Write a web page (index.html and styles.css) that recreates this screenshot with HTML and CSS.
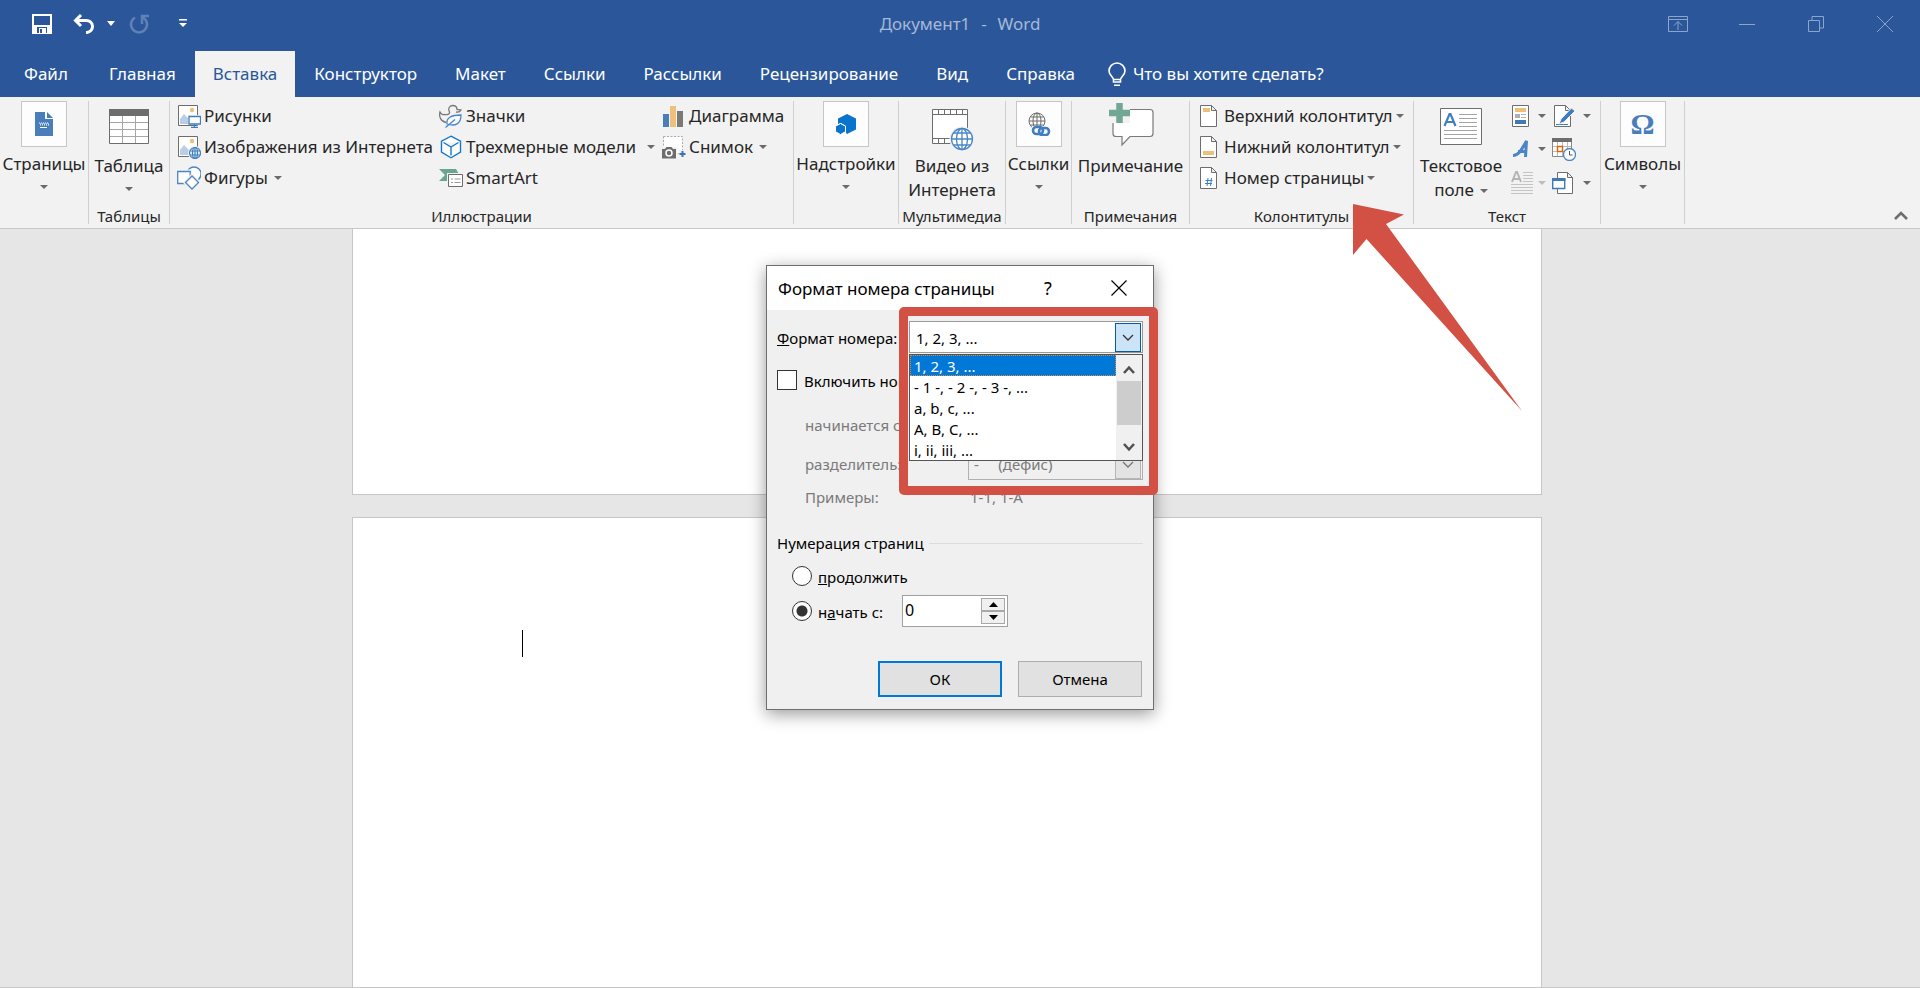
FILE: index.html
```html
<!DOCTYPE html>
<html lang="ru">
<head>
<meta charset="utf-8">
<title>Документ1 - Word</title>
<link rel="stylesheet" href="styles.css">
</head>
<body>
<div class="app">
  <header class="titlebar">
    <div class="quick">
      <button class="quick-btn save" aria-label="Сохранить"><svg width="20" height="20" viewBox="0 0 20 20"><path d="M1 1h18v18H1z" fill="none" stroke="#fff" stroke-width="2"/><path d="M1 11h18v8H1z" fill="#fff"/><path d="M5 13h10v6H5z" fill="#2b579a"/><path d="M7 14h7v5H7z" fill="#fff"/><path d="M8 15h2v4H8z" fill="#2b579a"/></svg></button>
      <button class="quick-btn undo" aria-label="Отменить"><svg width="22" height="20" viewBox="0 0 22 20"><path d="M8 1L2.500 6.500L8 12M3 6.500H13a6 6 0 0 1 1 12h-1" fill="none" stroke="#fff" stroke-width="3"/></svg></button>
      <button class="quick-btn undo-more" aria-label="Список отмен"><svg width="8" height="5"><path d="M0 0h8L4 5z" fill="#fff"/></svg></button>
      <button class="quick-btn redo" aria-label="Повторить"><svg width="20" height="20" viewBox="0 0 20 20"><path d="M6 3.500A8 8 0 1 0 14 3.500M13 10V2h7" fill="none" stroke="#5f81b4" stroke-width="2.500"/></svg></button>
      <button class="quick-btn" aria-label="Настройка панели"><svg width="8" height="9"><path d="M0 0h8v1.500H0zM0 4h8L4 8z" fill="#fff"/></svg></button>
    </div>
    <h1 class="doc-title">Документ1&nbsp; <span class="dash">-</span>&nbsp; Word</h1>
    <div class="window-controls">
      <button aria-label="Параметры ленты"><svg width="20" height="16" viewBox="0 0 20 16"><path d="M.5.5h19v15H.5zM.5 3.500h19M10 14V5.500M6 9.500l4-4 4 4"/></svg></button>
      <button aria-label="Свернуть"><svg width="16" height="16"><path d="M0 8.500h16"/></svg></button>
      <button aria-label="Свернуть в окно"><svg width="16" height="16"><path d="M.5 4.500h11v11H.5zM4 4V.5h11.500v11.500H12"/></svg></button>
      <button aria-label="Закрыть"><svg width="16" height="16"><path d="M0 0l16 16M16 0L0 16"/></svg></button>
    </div>
  </header>

  <nav class="tabs">
    <a class="tab tab-file" href="#">Файл</a>
    <a class="tab" href="#">Главная</a>
    <a class="tab active" href="#">Вставка</a>
    <a class="tab" href="#">Конструктор</a>
    <a class="tab" href="#">Макет</a>
    <a class="tab" href="#">Ссылки</a>
    <a class="tab" href="#">Рассылки</a>
    <a class="tab" href="#">Рецензирование</a>
    <a class="tab" href="#">Вид</a>
    <a class="tab" href="#">Справка</a>
    <a class="tab tell" href="#"><svg width="18" height="25" viewBox="0 0 18 25"><path d="M5.500 20v-2.500c0-2.500-4.500-4-4.500-8.500a8 8 0 0 1 16 0c0 4.500-4.500 6-4.500 8.500V20zM5.500 17.500h7" fill="none" stroke="#fff" stroke-width="1.600"/><path d="M6 22.500h6v1.500H6z" fill="#fff"/></svg>Что вы хотите сделать?</a>
  </nav>

  <section class="ribbon" aria-label="Вставка">
    <div class="group g-pages">
      <button class="big"><span class="tile"><svg width="18" height="24" viewBox="0 0 18 24"><path d="M0 0h10v7h8v17H0z" fill="#4a7ebb"/><path d="M12 0l6 6h-6z" fill="#4a7ebb"/><path d="M4 11h10M5 13h9" stroke="#fff" stroke-width="1" stroke-dasharray="1 1"/><path d="M4 12h10" stroke="#fff" stroke-width="1" stroke-dasharray="1 1" stroke-dashoffset="1"/><path d="M5 15.500h7" stroke="#fff" stroke-width="1"/></svg></span><span class="big-label">Страницы</span><i class="caret"></i></button>
    </div>
    <div class="group g-table">
      <button class="big plain"><svg class="big-icon" width="42" height="46" viewBox="0 0 42 46"><path d="M1.500 8.500h39v34h-39z" fill="#fff" stroke="#6d6d6d"/><path d="M1 8h40v7H1z" fill="#6d6d6d"/><path d="M2 21.500h38M2 28.500h38M2 35.500h38M14.500 15v27M27.500 15v27" stroke="#a6a6a6"/></svg><span class="big-label">Таблица</span><i class="caret"></i></button>
      <h2>Таблицы</h2>
    </div>
    <div class="group g-illus">
      <div class="cols">
        <div class="col">
          <button class="item"><svg width="24" height="24"><path d="M1.500 1.500h19v20h-19z" fill="#fff" stroke="#6d6d6d"/><path d="M3 20v-5l4-5 5 5v5z" fill="#b9cde4"/><circle cx="15" cy="6" r="2.200" fill="#edc07a"/><path d="M11 11h13v10H11z" fill="#f2f2f2"/><path d="M12 12.500h11.500v7.500H12zM17.500 20v3.500M14 23.500h7" fill="#fff" stroke="#3f7fc1" stroke-width="1.300"/></svg>Рисунки</button>
          <button class="item"><svg width="24" height="24"><path d="M1.500 1.500h19v20h-19z" fill="#fff" stroke="#6d6d6d"/><path d="M3 20v-5l4-5 5 5v5z" fill="#b9cde4"/><circle cx="15" cy="6" r="2.200" fill="#edc07a"/><circle cx="18" cy="18" r="7" fill="#f2f2f2"/><g fill="none" stroke="#3f7fc1" stroke-width="1.200"><circle cx="18" cy="18" r="5.500"/><ellipse cx="18" cy="18" rx="2.500" ry="5.500"/><path d="M13 16h10M13 20h10M18 12v12"/></g></svg>Изображения из Интернета</button>
          <button class="item"><svg width="24" height="24" fill="#fff" stroke="#4a86c6" stroke-width="1.300"><circle cx="17" cy="8" r="7"/><path d="M.7 5.500h12.500v12H.7z" stroke="#f2f2f2" stroke-width="4"/><path d="M.7 5.500h12.500v12H.7z"/><path d="M15 10l6.500 6.500L15 23l-6.500-6.500z" stroke="#f2f2f2" stroke-width="4"/><path d="M15 10l6.500 6.500L15 23l-6.500-6.500z"/></svg>Фигуры<i class="caret"></i></button>
        </div>
        <div class="col">
          <button class="item"><svg width="24" height="24" fill="none" stroke-width="1.300"><path d="M7 18.500C1 17 0 12 1 8c1 2 3 3 4 2.500 3 .5 6 0 5.500-2.500C9 5 10 1.500 13.500 1.500c3 0 4.500 2 4.500 4l4 .5c-1 2-2.500 2.500-5 2" stroke="#777"/><path d="M8 20c-1-6 4-9 14-9 0 8-5 12-14 9z" fill="#f8fafc" stroke="#4a86c6"/><path d="M6.500 23.500l9.500-8" stroke="#4a86c6"/></svg>Значки</button>
          <button class="item"><svg width="24" height="24" fill="#fff" stroke="#1478c8" stroke-width="1.400"><path d="M12 1.200l9.500 5v11l-9.500 5.600-9.500-5.600v-11zM4.500 7.500L12 12l7.500-4.500M12 12v8.500"/></svg>Трехмерные модели<i class="caret caret-far"></i></button>
          <button class="item"><svg width="24" height="24"><path d="M0 3h17l4 7v5H0l6-6z" fill="#6aa68f"/><path d="M8 7h16v15H8z" fill="#f2f2f2"/><path d="M9.500 8.500h14v12h-14z" fill="#fff" stroke="#6d6d6d"/><path d="M12 13h2m1.500 0h6M12 16.500h2m1.500 0h6" stroke="#999"/></svg>SmartArt</button>
        </div>
        <div class="col">
          <button class="item"><svg width="24" height="24"><path d="M1 10h6v13H1z" fill="#4a7ebb"/><path d="M8 2h6v21H8z" fill="#eec07c"/><path d="M15 7h6v16h-6z" fill="#7a7973"/></svg>Диаграмма</button>
          <button class="item"><svg width="24" height="24"><path d="M1.500 1.500h19v17h-19z" fill="#fff" stroke="#aaa" stroke-dasharray="2 1.500"/><path d="M0 12h15v12H0z" fill="#f2f2f2"/><path d="M0 14h3l1.500-2h5L11 14h3v9.500H0z" fill="#6d6d6d"/><circle cx="7" cy="18" r="3" fill="none" stroke="#fff" stroke-width="1.500"/><path d="M17 15h7v7h-7z" fill="#f2f2f2"/><path d="M20.500 16v6M17.500 19h6" stroke="#3773b5" stroke-width="2"/></svg>Снимок<i class="caret"></i></button>
        </div>
      </div>
      <h2>Иллюстрации</h2>
    </div>
    <div class="group g-addins">
      <button class="big"><span class="tile"><svg width="22" height="22" viewBox="0 0 22 22"><path d="M12 1l9 4.500v11L12 21 11 20V13L6 10 3 11V5.500z" fill="#0a73cc"/><path d="M5.500 10.500l5 2.700v5.500l-5 2.800-5-2.800v-5.500z" fill="#0a73cc" stroke="#fff"/></svg></span><span class="big-label">Надстройки</span><i class="caret"></i></button>
    </div>
    <div class="group g-media">
      <button class="big plain"><svg class="big-icon" width="42" height="46" viewBox="0 0 42 46"><path d="M1.500 8.500h35v34h-35z" fill="#fff" stroke="#6d6d6d"/><path d="M1 13.500h35M1 37.500h20M7.500 9v4M13.500 9v4M19.500 9v4M25.500 9v4M31.500 9v4M7.500 38v4M13.500 38v4M19.500 38v4" stroke="#6d6d6d"/><circle cx="31" cy="38" r="12.500" fill="#f2f2f2"/><g fill="#fff" stroke="#4a86c6" stroke-width="1.300"><circle cx="31" cy="38" r="10.500"/><ellipse cx="31" cy="38" rx="5.500" ry="10.500"/><path d="M21 38h20M23 32h16M23 44h16M31 28v20" /></g></svg><span class="big-label">Видео из<br>Интернета</span></button>
      <h2>Мультимедиа</h2>
    </div>
    <div class="group g-links">
      <button class="big"><span class="tile"><svg width="24" height="24"><g fill="none" stroke="#6d6d6d"><circle cx="10" cy="9" r="8"/><ellipse cx="10" cy="9" rx="4" ry="8"/><path d="M2 9h16M3.500 5h13M3.500 13h13M10 1v16"/></g><path d="M5 14h19v10H5z" fill="#fdfdfd"/><g fill="none" stroke="#3f7fc1" stroke-width="2.600"><rect x="6" y="15" width="10" height="7" rx="3.500"/><rect x="12" y="16" width="10" height="7" rx="3.500"/></g></svg></span><span class="big-label">Ссылки</span><i class="caret"></i></button>
    </div>
    <div class="group g-notes">
      <button class="big plain"><svg class="big-icon" width="48" height="46" viewBox="0 0 48 46"><path d="M9 8.500h34q3 0 3 3v21q0 3-3 3H23l-8 8.500v-8.500H9q-3 0-3-3v-21q0-3 3-3z" fill="#fff" stroke="#7a7a7a" stroke-width="1.200"/><path d="M2 2h21v20H2z" fill="#f2f2f2"/><path d="M12.500 2v20M2 12h21" stroke="#71a794" stroke-width="6.500"/></svg><span class="big-label">Примечание</span></button>
      <h2>Примечания</h2>
    </div>
    <div class="group g-headers">
      <div class="col">
        <button class="item"><svg width="24" height="24"><path d="M.5 1.500h11l5 5v16H.5zM11.500 1.500v5h5" fill="#fff" stroke="#6d6d6d"/><path d="M3 4h7v4H3z" fill="#edc07a"/></svg>Верхний колонтитул<i class="caret"></i></button>
        <button class="item"><svg width="24" height="24"><path d="M.5 1.500h11l5 5v16H.5zM11.500 1.500v5h5" fill="#fff" stroke="#6d6d6d"/><path d="M3 16h11v4H3z" fill="#edc07a"/></svg>Нижний колонтитул<i class="caret"></i></button>
        <button class="item"><svg width="24" height="24"><path d="M.5 1.500h11l5 5v16H.5zM11.500 1.500v5h5" fill="#fff" stroke="#6d6d6d"/><path d="M8 12l-1 8M11.500 12l-1 8M5.500 14.500h7M5 17.500h7" stroke="#3f7fc1"/></svg>Номер страницы<i class="caret"></i></button>
      </div>
      <h2>Колонтитулы</h2>
    </div>
    <div class="group g-text">
      <div class="cols">
        <button class="big plain"><svg class="big-icon" width="44" height="46" viewBox="0 0 44 46"><path d="M1.500 7.500h41v36h-41z" fill="#fff" stroke="#6d6d6d"/><path d="M5.500 25L10.500 13h1L16.500 25M7.500 21h7" fill="none" stroke="#3f7fc1" stroke-width="2.200"/><path d="M20 13.500h18M20 17.500h18M20 21.500h18M20 25.500h18M5 29.500h33M5 33.500h33M5 37.500h33" stroke="#a6a6a6"/></svg><span class="big-label">Текстовое<br>поле<i class="caret"></i></span></button>
        <div class="mini">
          <button class="item" aria-label="Экспресс-блоки"><svg width="24" height="24"><path d="M1.500 1.500h16v21h-16z" fill="#fff" stroke="#6d6d6d"/><path d="M4 4h11v4H4z" fill="#edc07a"/><path d="M4 10h5v4H4z" fill="#b0b0b0"/><path d="M10 10.500h5M10 13.500h5" stroke="#b0b0b0"/><path d="M4 16h11v4H4z" fill="#3f7ab5"/></svg><i class="caret"></i></button>
          <button class="item" aria-label="Строка подписи"><svg width="24" height="24"><path d="M2.500 1.500h11l5 5v16h-16zM13.500 1.500v5h5" fill="#fff" stroke="#6d6d6d"/><path d="M4 20.500h12" stroke="#3f7fc1"/><path d="M7 20l2-5L19.500 4l3.500 3L12 18z" fill="#3f7fc1" stroke="#f2f2f2"/></svg><i class="caret"></i></button>
          <button class="item" aria-label="WordArt"><svg width="24" height="24" fill="none" stroke="#4a86c6" stroke-width="3"><path d="M2 18.500c5 0 7-3 13.500-14.500L14.500 20M7 14.500h9"/></svg><i class="caret"></i></button>
          <button class="item" aria-label="Дата и время"><svg width="24" height="24"><path d="M.5 2.500h19v17H.5z" fill="#fff" stroke="#888"/><path d="M0 1h20v4H0z" fill="#6d6d6d"/><path d="M1 9.500h18M1 14.500h18M5.500 5v14M10.500 5v14M15.500 5v14" stroke="#bbb"/><path d="M5.500 9.500h5v5h-5z" fill="#fff" stroke="#d8690f" stroke-width="1.500"/><circle cx="17.500" cy="17.500" r="6" fill="#fff" stroke="#4a86c6" stroke-width="1.300"/><path d="M17.500 14v4h3" fill="none" stroke="#555"/></svg></button>
          <button class="item off" aria-label="Буквица" disabled><svg width="24" height="24"><path d="M1 11L5 1h1l4 10M2.500 8h6" fill="none" stroke="#b5b5b5" stroke-width="2"/><path d="M12 1.500h10M12 4.500h10M12 7.500h10M12 10.500h10M0 13.500h22M0 16.500h22M0 19.500h22M0 22.500h22" stroke="#c4c4c4"/></svg><i class="caret"></i></button>
          <button class="item" aria-label="Объект"><svg width="24" height="24"><path d="M5.500 1.500h10l5 5v16h-15zM15.500 1.500v5h5" fill="#fff" stroke="#6d6d6d"/><path d="M.7 8h12v9.500H.7z" fill="#fff" stroke="#3f7ab5" stroke-width="1.400"/><path d="M0 7h13.500v3H0z" fill="#3f7ab5"/></svg><i class="caret"></i></button>
        </div>
      </div>
      <h2>Текст</h2>
    </div>
    <div class="group g-symbols">
      <button class="big"><span class="tile omega">Ω</span><span class="big-label">Символы</span><i class="caret"></i></button>
    </div>
    <button class="collapse" aria-label="Свернуть ленту"><svg width="14" height="9"><path d="M1 8l6-6 6 6" fill="none" stroke="#6d6d6d" stroke-width="2.600"/></svg></button>
  </section>

  <main class="workspace">
    <div class="page page-first"></div>
    <div class="page page-second"><span class="cursor"></span></div>
  </main>

  <div class="dialog" role="dialog" aria-labelledby="dlg-title">
    <div class="dlg-head">
      <h2 id="dlg-title">Формат номера страницы</h2>
      <button class="dlg-help" aria-label="Справка">?</button>
      <button class="dlg-close" aria-label="Закрыть"><svg width="16" height="16"><path d="M.5.5l15 15M15.500.5l-15 15" stroke="#000" stroke-width="1.200"/></svg></button>
    </div>
    <form class="dlg-body">
      <div class="row row-format">
        <label for="fmt"><u>Ф</u>ормат номера:</label>
        <span class="combo open">
          <select id="fmt"><option>1, 2, 3, ...</option></select>
          <span class="combo-btn"><svg width="12" height="7"><path d="M1 1l5 5 5-5" fill="none" stroke="#333" stroke-width="1.300"/></svg></span>
          <span class="list">
            <span class="options" role="listbox" aria-label="Формат номера">
              <span class="option chosen" role="option" aria-selected="true">1, 2, 3, ...</span>
              <span class="option" role="option">- 1 -, - 2 -, - 3 -, ...</span>
              <span class="option" role="option">a, b, c, ...</span>
              <span class="option" role="option">A, B, C, ...</span>
              <span class="option" role="option">i, ii, iii, ...</span>
            </span>
            <span class="scroll">
              <svg width="12" height="9"><path d="M1 8l5-5.500L11 8" fill="none" stroke="#505050" stroke-width="2.500"/></svg>
              <span class="thumb"></span>
              <svg width="12" height="9"><path d="M1 1l5 5.500L11 1" fill="none" stroke="#505050" stroke-width="2.500"/></svg>
            </span>
          </span>
        </span>
      </div>
      <div class="row row-check"><input type="checkbox" id="chap"><label for="chap">Включить ном</label></div>
      <div class="row row-start muted"><span>начинается с</span></div>
      <div class="row row-sep muted">
        <label for="sep">разделитель:</label>
        <span class="combo small">
          <select id="sep" disabled><option>-&nbsp;&nbsp;&nbsp;&nbsp; (дефис)</option></select>
          <span class="combo-btn"><svg width="12" height="7"><path d="M1 1l5 5 5-5" fill="none" stroke="#777" stroke-width="1.300"/></svg></span>
        </span>
      </div>
      <div class="row row-sample muted"><span>Примеры:</span><span class="sample">1-1, 1-A</span></div>
      <div class="row row-legend">Нумерация страниц</div>
      <div class="row row-radio"><input type="radio" name="n" id="cont"><label for="cont"><u>п</u>родолжить</label></div>
      <div class="row row-radio row-from">
        <input type="radio" name="n" id="from" checked><label for="from">н<u>а</u>чать с:</label>
        <span class="spin"><input type="text" value="0" aria-label="Начать с"><span class="spin-btns">
          <button type="button" aria-label="Больше"><svg width="9" height="5"><path d="M0 5h9L4.500 0z"/></svg></button>
          <button type="button" aria-label="Меньше"><svg width="9" height="5"><path d="M0 0h9L4.500 5z"/></svg></button></span></span>
      </div>
      <div class="dlg-foot"><button type="button" class="btn primary">ОК</button><button type="button" class="btn">Отмена</button></div>
    </form>
    <div class="highlight"></div>
  </div>
  <svg class="pointer" width="170" height="208" viewBox="0 0 170 208"><path d="M0 0l51 10.500-18 9.500L169 207 13.500 35 0 51z" fill="#d25144"/></svg>
</div>
</body>
</html>
```
FILE: styles.css
```css
* { box-sizing: border-box; }
body { margin: 0; font: 17px/24px "Noto Sans", "Open Sans", sans-serif; color: #262626; }
button, input, select { font: inherit; color: inherit; margin: 0; }
button { background: none; border: 0; padding: 0; }
h1, h2 { margin: 0; font-weight: 400; }
svg { display: block; flex: none; }

.app { position: relative; display: flex; flex-direction: column; min-height: 100vh; overflow: hidden; }

/* Title bar */
.titlebar { display: grid; grid-template-columns: 1fr auto 1fr; align-items: center; height: 51px; padding-bottom: 4px; background: #2b579a; }
.quick { display: flex; align-items: center; padding-left: 32px; }
.undo { margin-left: 21px; }
.undo-more { margin-left: 12px; }
.redo { margin-left: 14px; margin-right: 30px; }
.doc-title { font-size: 17px; color: #a5b9d8; white-space: nowrap; }
.dash { padding: 0 2px; }
.window-controls { display: flex; justify-content: flex-end; padding-right: 1px; }
.window-controls button { display: flex; justify-content: center; width: 69px; }
.window-controls svg { fill: none; stroke: #8ba5cb; }

/* Tabs */
.tabs { display: flex; height: 46px; background: #2b579a; }
.tab { display: flex; align-items: center; padding: 0 19px; color: #fff; text-decoration: none; white-space: nowrap; }
.tab-file { padding: 0 22px 0 24px; }
.tab.active { background: #f2f2f2; color: #2b579a; padding: 0 18px; }
.tell { gap: 7px; padding: 0 14px; }

/* Ribbon */
.ribbon { display: flex; align-items: stretch; height: 132px; padding: 4px 0; background: #f2f2f2; border-bottom: 1px solid #c8c8c8; }
.group { flex: none; display: flex; flex-direction: column; border-right: 1px solid #cfcfcf; }
.group h2 { margin-top: auto; font-size: 15px; line-height: 16px; text-align: center; white-space: nowrap; }
.g-pages { width: 89px; }
.g-table { width: 81px; }
.g-illus { width: 624px; }
.g-addins { width: 105px; }
.g-media { width: 107px; }
.g-links { width: 66px; }
.g-notes { width: 118px; }
.g-headers { width: 224px; }
.g-headers .col { padding-left: 10px; }
.g-text { width: 187px; }
.g-symbols { width: 84px; }

.big { display: flex; flex-direction: column; align-items: center; white-space: nowrap; }
.big .tile { display: flex; align-items: center; justify-content: center; width: 46px; height: 46px; margin-bottom: 5px; background: #fdfdfd; border: 1px solid #c6c6c6; }
.big-icon { margin-bottom: 7px; overflow: visible; }
.big > .caret { margin: 9px 0 0; }
.omega { font: 700 30px/30px "Liberation Serif", serif; color: #4a7ebb; }
.caret { flex: none; display: inline-block; width: 0; height: 0; border: 4px solid transparent; border-top: 4px solid #6a6a6a; border-bottom: 0; }
.big-label .caret { vertical-align: middle; margin-left: 6px; }

.cols { display: flex; }
.g-illus .cols { display: grid; grid-template-columns: 262px 223px auto; padding-left: 7px; }
.item { display: flex; align-items: center; gap: 3px; height: 31px; padding-bottom: 2px; white-space: nowrap; }
.item .caret { margin-left: 3px; }
.item .caret-far { margin-left: 8px; }
.g-headers .item { gap: 0; }
.g-text .big { width: 94px; }
.mini { display: grid; grid-template-columns: 41px auto; padding-left: 3px; }
.mini .item { gap: 0; }
.mini .item:nth-child(even) .caret { margin-left: 7px; }
.off .caret { border-top-color: #bdbdbd; }
.collapse { margin: 0 12px 4px auto; align-self: flex-end; }

/* Document */
.workspace { flex: 1; display: flex; flex-direction: column; align-items: center; gap: 22px; padding-right: 26px; background: #e6e6e6; border-bottom: 1px solid #c6c6c6; }
.page { width: 100%; max-width: 1190px; background: #fff; border: 1px solid #c6c6c6; }
.page-first { height: 266px; border-top: 0; }
.page-second { flex: 1; border-bottom: 0; padding: 112px 169px; }
.cursor { display: block; width: 1px; height: 27px; background: #000; }

/* Dialog */
.dialog { position: absolute; left: 766px; top: 265px; width: 388px; background: #f0f0f0; border: 1px solid #6e6e6e; box-shadow: 0 4px 16px rgba(0, 0, 0, .4); font-size: 15px; line-height: 20px; color: #000; }
.dlg-head { display: flex; align-items: center; height: 44px; padding: 0 26px 0 11px; background: #fff; }
.dlg-head h2 { flex: 1; padding-top: 2px; font-size: 17px; }
.dlg-help { width: 20px; font-size: 18px; margin-right: 53px; }
.dlg-body { padding: 11px 10px 12px; }
.row { display: flex; align-items: center; white-space: nowrap; }
.row label { padding-top: 2px; }
.row-format { justify-content: space-between; height: 32px; }
.row-check { height: 28px; margin-top: 13px; gap: 7px; }
.row-check label { max-width: 104px; overflow: hidden; }
.row-start { height: 32px; margin-top: 15px; padding-left: 28px; }
.row-sep { justify-content: space-between; height: 32px; margin-top: 7px; padding-left: 28px; }
.row-sep label { padding-top: 0; }
.row-sample { height: 26px; margin-top: 4px; padding-left: 28px; justify-content: space-between; }
.sample { width: 173px; }
.row-legend { height: 26px; margin-top: 20px; gap: 5px; }
.row-legend::after { content: ""; flex: 1; height: 1px; background: #dcdcdc; }
.row-radio { height: 26px; margin-top: 7px; padding-left: 15px; gap: 6px; }
.row-from { height: 32px; margin-top: 6px; }
.muted { color: #7a7a7a; }

.combo { position: relative; display: flex; width: 234px; height: 32px; }
.combo.small { width: 175px; }
.combo select { appearance: none; width: 100%; padding: 2px 30px 0 6px; background: #fff; border: 1px solid #9a9a9a; border-radius: 0; opacity: 1; }
.combo.small select { background: #f0f0f0; border-color: #b0b0b0; color: #7a7a7a; padding: 0 30px 0 5px; }
.combo-btn { position: absolute; right: 2px; top: 2px; bottom: 1px; width: 26px; display: flex; align-items: center; justify-content: center; background: #cce4f7; border: 1px solid #0a5a9e; pointer-events: none; }
.small .combo-btn { background: #e3e3e3; border-color: #b5b5b5; }
.list { position: absolute; z-index: 2; left: 0; top: 33px; width: 234px; display: flex; border: 1px solid #555; background: #fff; }
.options { flex: 1; display: flex; flex-direction: column; }
.option { height: 21px; padding: 1px 0 0 4px; }
.chosen { background: #0078d7; color: #fff; outline: 1px dotted #e28a32; outline-offset: -1px; }
.scroll { width: 26px; display: flex; flex-direction: column; justify-content: space-between; align-items: center; padding: 10px 0 8px; background: #f0f0f0; }
.thumb { width: 24px; height: 44px; margin-bottom: 12px; background: #cdcdcd; }

input[type=checkbox] { appearance: none; flex: none; width: 20px; height: 20px; background: #fff; border: 1px solid #333; }
input[type=radio] { appearance: none; flex: none; width: 20px; height: 20px; background: #fff; border: 1px solid #333; border-radius: 50%; }
input[type=radio]:checked { background: radial-gradient(#333 5px, #fff 6px); }
.spin { display: flex; width: 106px; height: 32px; margin-left: 13px; padding: 2px; background: #fff; border: 1px solid #a0a0a0; }
.spin input { flex: 1; min-width: 0; padding: 0 0 2px; border: 0; background: none; font-size: 16px; }
.spin-btns { display: grid; width: 24px; }
.spin-btns button { display: flex; align-items: center; justify-content: center; background: #f0f0f0; border: 1px solid #a8a8a8; }
.dlg-foot { display: flex; justify-content: flex-end; gap: 16px; margin-top: 34px; padding-right: 1px; }
.btn { width: 124px; height: 36px; background: #e1e1e1; border: 1px solid #adadad; }
.btn.primary { border: 2px solid #0078d7; }

.highlight { position: absolute; z-index: 3; left: 132px; top: 41px; width: 259px; height: 188px; border: 9px solid #d25144; border-radius: 5px; pointer-events: none; }
.pointer { position: absolute; left: 1353px; top: 204px; pointer-events: none; }
```
